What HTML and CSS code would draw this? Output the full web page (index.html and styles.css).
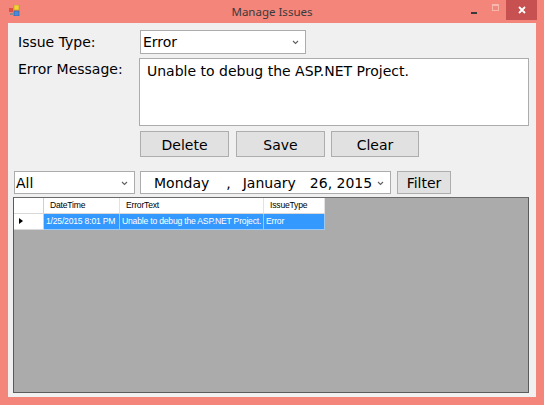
FILE: index.html
```html
<!DOCTYPE html>
<html>
<head>
<meta charset="utf-8">
<link rel="stylesheet" href="styles.css">
</head>
<body>
<div class="window">
  <div class="titlebar">
    <svg class="appicon" width="11" height="11" viewBox="0 0 11 11">
      <rect x="5" y="0" width="5" height="5" fill="#f5d23c" stroke="#b89a20" stroke-width="0.6"/>
      <rect x="0" y="3" width="4" height="4" fill="#e05040"/>
      <rect x="5" y="6" width="5" height="5" fill="#4a8ad8" stroke="#2a5aa0" stroke-width="0.6"/>
      <rect x="1" y="8" width="3" height="2" fill="#8a8a8a"/>
    </svg>
    <div class="title">Manage Issues</div>
    <div class="caption-buttons">
      <div class="cap min"><span class="min-bar"></span></div>
      <div class="cap max"><span class="max-box"></span></div>
      <div class="cap close">
        <svg width="8" height="8" viewBox="0 0 8 8"><path d="M1 1 L7 7 M7 1 L1 7" stroke="#fff" stroke-width="1.8"/></svg>
      </div>
    </div>
  </div>
  <div class="client">
    <div class="field-row">
      <div class="label">Issue Type:</div>
      <div class="combo type-combo">
        <span class="combo-text">Error</span>
        <svg class="chev" width="7" height="5" viewBox="0 0 7 5"><path d="M1 1 L3.5 3.5 L6 1" fill="none" stroke="#606060" stroke-width="1.1"/></svg>
      </div>
    </div>
    <div class="field-row msg-row">
      <div class="label">Error Message:</div>
      <div class="textarea">Unable to debug the ASP.NET Project.</div>
    </div>
    <div class="button-row">
      <div class="btn btn-delete">Delete</div>
      <div class="btn btn-save">Save</div>
      <div class="btn btn-clear">Clear</div>
    </div>
    <div class="filter-row">
      <div class="combo all-combo">
        <span class="combo-text">All</span>
        <svg class="chev" width="7" height="5" viewBox="0 0 7 5"><path d="M1 1 L3.5 3.5 L6 1" fill="none" stroke="#606060" stroke-width="1.1"/></svg>
      </div>
      <div class="combo dtp">
        <span class="dtp-day">Monday</span>
        <span class="dtp-comma">,</span>
        <span class="dtp-month">January</span>
        <span class="dtp-date">26, 2015</span>
        <svg class="chev" width="7" height="5" viewBox="0 0 7 5"><path d="M1 1 L3.5 3.5 L6 1" fill="none" stroke="#606060" stroke-width="1.1"/></svg>
      </div>
      <div class="btn btn-filter">Filter</div>
    </div>
    <div class="grid">
      <div class="grid-table">
        <div class="grid-row header">
          <div class="cell rowhead"></div>
          <div class="cell c1">DateTime</div>
          <div class="cell c2">ErrorText</div>
          <div class="cell c3">IssueType</div>
        </div>
        <div class="grid-row data">
          <div class="cell rowhead"><span class="arrow"></span></div>
          <div class="cell c1 sel">1/25/2015 8:01 PM</div>
          <div class="cell c2 sel">Unable to debug the ASP.NET Project.</div>
          <div class="cell c3 sel">Error</div>
        </div>
      </div>
    </div>
  </div>
</div>
</body>
</html>
```

FILE: styles.css
```css
* { box-sizing: border-box; }
html, body { margin: 0; padding: 0; }
body { width: 544px; height: 405px; overflow: hidden; background: #f3857a; }

.window {
  width: 544px;
  height: 405px;
  background: #f3857a;
  display: flex;
  flex-direction: column;
  padding: 0 8px 8px 8px;
}

.titlebar {
  height: 23px;
  display: flex;
  align-items: center;
  position: relative;
  flex: none;
}
.appicon { margin-top: -2px; margin-left: 1px; }
.title {
  position: absolute;
  left: 0; right: 0;
  top: 4px;
  text-align: center;
  font-family: "Noto Sans", "DejaVu Sans", sans-serif;
  font-size: 11.5px;
  color: #3a3a3a;
  line-height: 16px;
}
.caption-buttons {
  position: absolute;
  right: -1px;
  top: 0;
  display: flex;
  height: 20px;
}
.cap { height: 20px; display: flex; align-items: center; justify-content: center; }
.min { width: 22px; }
.min-bar { width: 6px; height: 2px; background: #3a3a3a; margin-top: 5px; }
.max { width: 21px; }
.max-box { width: 7px; height: 7px; border: 1px solid #f7b7ad; border-top-width: 2px; margin-top: -6px; }
.close { width: 31px; background: #c75050; }

.client {
  flex: 1;
  background: #f0f0f0;
  display: flex;
  flex-direction: column;
  padding: 7px 7px 4px 5px;
  font-family: "DejaVu Sans", Verdana, sans-serif;
  font-size: 14px;
  color: #000;
}

.field-row { display: flex; align-items: flex-start; padding-left: 5px; }
.label { width: 122px; flex: none; line-height: 24px; }
.msg-row { margin-top: 4px; }
.msg-row .label { line-height: 23px; }

.combo {
  background: #fff;
  border: 1px solid #acacac;
  display: flex;
  align-items: center;
  position: relative;
}
.combo-text { padding-left: 2px; line-height: 20px; }
.chev { position: absolute; right: 6px; top: 50%; margin-top: -2px; }
.type-combo { width: 166px; height: 24px; }

.textarea {
  width: 390px;
  height: 68px;
  margin-left: -1px;
  background: #fff;
  border: 1px solid #acacac;
  padding: 3px 0 0 7px;
  line-height: 18px;
}

.button-row {
  display: flex;
  margin-top: 5px;
  padding-left: 127px;
}
.btn {
  background: #e1e1e1;
  border: 1px solid #adadad;
  display: flex;
  align-items: center;
  justify-content: center;
  height: 26px;
  padding-top: 1px;
}
.btn-delete { width: 89px; }
.btn-save { width: 89px; margin-left: 7px; }
.btn-clear { width: 88px; margin-left: 6px; }

.filter-row {
  display: flex;
  margin-top: 14px;
  padding-left: 1px;
  height: 23px;
}
.all-combo { width: 121px; height: 23px; }
.all-combo .combo-text { padding-left: 1px; }
.dtp { width: 251px; height: 23px; margin-left: 5px; padding-left: 13px; }
.dtp-comma { margin-left: 17px; }
.dtp-month { margin-left: 12px; }
.dtp-date { margin-left: 14px; }
.btn-filter { width: 54px; height: 23px; margin-left: 6px; }

.grid {
  margin-top: 3px;
  height: 196px;
  width: 516px;
  background: #ababab;
  border: 1px solid #5a5a5a;
  border-top-color: #6a6a6a;
}
.grid-table {
  display: flex;
  flex-direction: column;
  width: 311px;
  font-family: "Liberation Sans", Arial, sans-serif;
  font-size: 8.6px;
  letter-spacing: -0.2px;
}
.grid-row { display: flex; }
.header { height: 16px; background: #fff; border-bottom: 1px solid #d8d8d8; }
.data { height: 16px; }
.cell {
  line-height: 15px;
  padding-left: 4px;
  white-space: nowrap;
  overflow: hidden;
  border-right: 1px solid #e2e2e2;
}
.header .cell { color: #000; padding-left: 6px; }
.rowhead { width: 30px; background: #fff; position: relative; border-right: 1px solid #cfcfcf; }
.data .rowhead { border-bottom: 1px solid #d8d8d8; }
.c1 { width: 76px; }
.c2 { width: 144px; }
.c3 { width: 61px; }
.sel { background: #3399ff; color: #fff; border-right: 1px solid #9cc8f4; border-bottom: 1px solid #9cc8f4; padding-left: 2px; }
.arrow {
  position: absolute;
  left: 5px;
  top: 4px;
  width: 0; height: 0;
  border-top: 3.5px solid transparent;
  border-bottom: 3.5px solid transparent;
  border-left: 4px solid #000;
}
```
